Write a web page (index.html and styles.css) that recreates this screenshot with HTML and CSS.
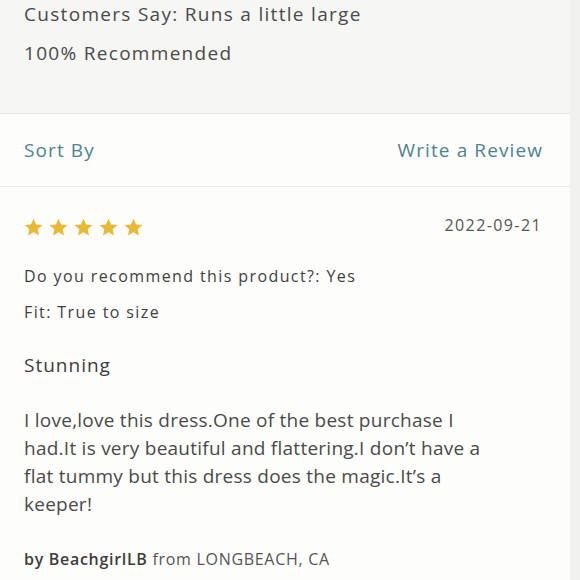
FILE: index.html
```html
<!DOCTYPE html>
<html>
<head>
<meta charset="utf-8">
<link rel="stylesheet" href="styles.css">
</head>
<body>
<div class="page">
  <section class="summary">
    <p class="sum-line">Customers Say: Runs a little large</p>
    <p class="sum-line second">100% Recommended</p>
  </section>
  <section class="toolbar">
    <span class="link">Sort By</span>
    <span class="link">Write a Review</span>
  </section>
  <section class="review">
    <div class="review-head">
      <div class="stars">
        <svg viewBox="0 0 24 24" class="star"><path d="M12 0.8l3.3 7.3 8 .8-6 5.4 1.7 7.9L12 18.1l-7 4.1 1.7-7.9-6-5.4 8-.8z"/></svg>
        <svg viewBox="0 0 24 24" class="star"><path d="M12 0.8l3.3 7.3 8 .8-6 5.4 1.7 7.9L12 18.1l-7 4.1 1.7-7.9-6-5.4 8-.8z"/></svg>
        <svg viewBox="0 0 24 24" class="star"><path d="M12 0.8l3.3 7.3 8 .8-6 5.4 1.7 7.9L12 18.1l-7 4.1 1.7-7.9-6-5.4 8-.8z"/></svg>
        <svg viewBox="0 0 24 24" class="star"><path d="M12 0.8l3.3 7.3 8 .8-6 5.4 1.7 7.9L12 18.1l-7 4.1 1.7-7.9-6-5.4 8-.8z"/></svg>
        <svg viewBox="0 0 24 24" class="star"><path d="M12 0.8l3.3 7.3 8 .8-6 5.4 1.7 7.9L12 18.1l-7 4.1 1.7-7.9-6-5.4 8-.8z"/></svg>
      </div>
      <span class="date">2022-09-21</span>
    </div>
    <p class="meta first">Do you recommend this product?: Yes</p>
    <p class="meta">Fit: True to size</p>
    <h3 class="title">Stunning</h3>
    <p class="body">I love,love this dress.One of the best purchase I had.It is very beautiful and flattering.I don’t have a flat tummy but this dress does the magic.It’s a keeper!</p>
    <p class="author"><span class="name">by BeachgirlLB</span> from LONGBEACH, CA</p>
  </section>
</div>
</body>
</html>
```

FILE: styles.css
```css
html, body {
  margin: 0;
  padding: 0;
  background: #f1f1ef;
}
body {
  font-family: "Open Sans", "Noto Sans", sans-serif;
  color: #474747;
  width: 580px;
  height: 580px;
  overflow: hidden;
}
.page {
  width: 570px;
  background: #fdfdfb;
  min-height: 580px;
}
p, h3 { margin: 0; }
.summary {
  background: #f6f6f4;
  padding: 0 24px 46px;
  border-bottom: 1px solid #e6e6e3;
}
.sum-line {
  font-size: 19px;
  line-height: 28px;
  letter-spacing: 1.3px;
  color: #4a4a4a;
}
.sum-line.second { margin-top: 11px; }
.toolbar {
  display: flex;
  justify-content: space-between;
  align-items: center;
  height: 72px;
  padding: 0 27px 0 24px;
  border-bottom: 1px solid #e9e9e6;
}
.link {
  font-size: 19px;
  color: #4d8391;
  letter-spacing: 1.1px;
}
.review {
  padding: 30px 29px 0 24px;
}
.review-head {
  display: flex;
  justify-content: space-between;
  align-items: center;
  height: 20px;
}
.stars { display: flex; gap: 6px; }
.star { width: 19px; height: 19px; fill: #e9b936; }
.date { font-size: 16px; color: #555; letter-spacing: 1.4px; margin-top: -4px; margin-right: -1px; }
.meta {
  font-size: 16px;
  line-height: 22px;
  color: #3f3f3f;
  letter-spacing: 1.4px;
  margin-top: 14px;
}
.meta.first { margin-top: 28px; }
.title {
  font-weight: normal;
  font-size: 19px;
  line-height: 28px;
  color: #3c3c3c;
  margin-top: 28px;
  letter-spacing: 1px;
}
.body {
  font-size: 19px;
  line-height: 28px;
  color: #4a4a4a;
  margin-top: 27px;
  letter-spacing: 0.25px;
  max-width: 475px;
}
.author {
  font-size: 16px;
  line-height: 24px;
  color: #555;
  margin-top: 29px;
  letter-spacing: 0.7px;
}
.name { color: #3d3d3d; font-weight: 600; }
```
